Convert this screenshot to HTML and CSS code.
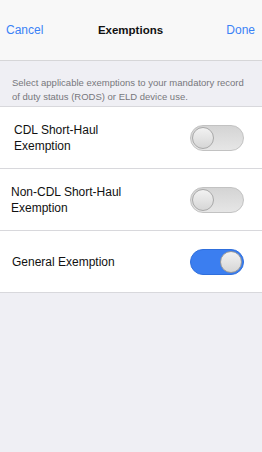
FILE: index.html
```html
<!DOCTYPE html>
<html>
<head>
<meta charset="utf-8">
<link rel="stylesheet" href="styles.css">
</head>
<body>
<div class="screen">
  <header class="nav">
    <span class="nav-btn left">Cancel</span>
    <span class="nav-title">Exemptions</span>
    <span class="nav-btn right">Done</span>
  </header>
  <p class="desc">Select applicable exemptions to your mandatory record of duty status (RODS) or ELD device use.</p>
  <div class="list">
    <div class="row">
      <span class="label l1">CDL Short-Haul<br>Exemption</span>
      <span class="toggle"><span class="knob"></span></span>
    </div>
    <div class="row">
      <span class="label l2">Non-CDL Short-Haul<br>Exemption</span>
      <span class="toggle"><span class="knob"></span></span>
    </div>
    <div class="row">
      <span class="label l3">General Exemption</span>
      <span class="toggle on"><span class="knob"></span></span>
    </div>
  </div>
</div>
</body>
</html>
```

FILE: styles.css
```css
html, body {
  margin: 0;
  padding: 0;
}
body {
  background: #efeff4;
  font-family: "Liberation Sans", Arial, sans-serif;
  width: 262px;
  height: 452px;
  overflow: hidden;
}
.screen {
  display: flex;
  flex-direction: column;
}
.nav {
  height: 60px;
  background: #f8f8f8;
  border-bottom: 1px solid #d6d6d8;
  display: grid;
  grid-template-columns: 1fr auto 1fr;
  align-items: center;
  padding: 0 7px 0 6px;
}
.nav-btn {
  color: #3a82f6;
  font-size: 12px;
}
.nav-btn.right {
  justify-self: end;
}
.nav-title {
  color: #111;
  font-size: 11.5px;
  font-weight: bold;
}
.desc {
  margin: 0;
  padding: 15px 12px 2px 12px;
  font-size: 9.5px;
  line-height: 14px;
  color: #77777c;
}
.list {
  background: #fff;
  border-top: 1px solid #d8d8dc;
}
.row {
  height: 61px;
  border-bottom: 1px solid #d8d8dc;
  display: flex;
  align-items: center;
  justify-content: space-between;
  padding: 0 18px 0 12px;
}
.label {
  font-size: 12px;
  line-height: 16px;
  color: #111;
}
.l1 { margin-left: 2px; }
.l2 { margin-left: -1px; }
.toggle {
  width: 50px;
  height: 24px;
  border-radius: 13px;
  border: 1px solid #c2c2c2;
  background: linear-gradient(#d4d4d4, #e6e6e6);
  display: flex;
  align-items: center;
  justify-content: flex-start;
  padding: 0 1px;
}
.knob {
  width: 22px;
  height: 22px;
  border-radius: 50%;
  border: 1px solid #a9a9a9;
  background: linear-gradient(#f2f2f2, #d6d6d6);
  box-sizing: border-box;
}
.toggle.on {
  background: #3b7ef0;
  border-color: #2f6fdc;
  justify-content: flex-end;
}
.toggle.on .knob {
  border-color: #9a9a9a;
}
```
